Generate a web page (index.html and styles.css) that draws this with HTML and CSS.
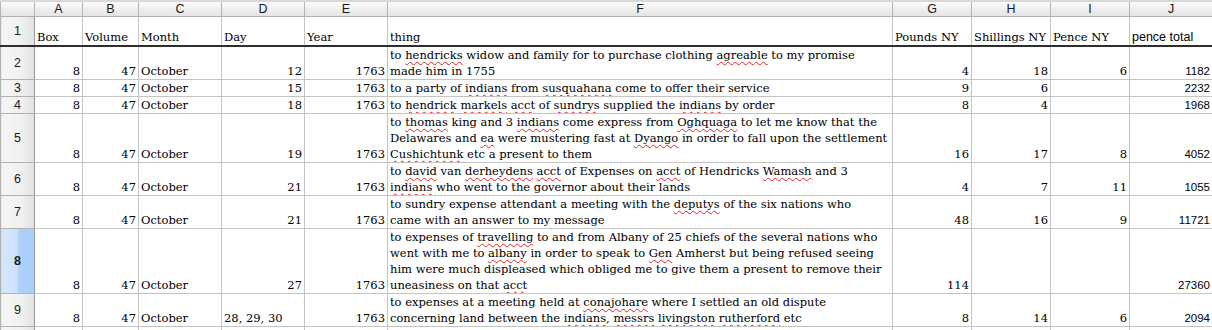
FILE: index.html
```html
<!DOCTYPE html>
<html lang="en">
<head>
  <meta charset="UTF-8">
  <title>Expenses 1763 - Sheet</title>
  <link rel="stylesheet" href="styles.css">
</head>
<body>
  <div class="topstrip"></div>
  <table class="sheet">
    <colgroup>
      <col class="c-num">
      <col class="c-a">
      <col class="c-b">
      <col class="c-c">
      <col class="c-d">
      <col class="c-e">
      <col class="c-f">
      <col class="c-g">
      <col class="c-h">
      <col class="c-i">
      <col class="c-j">
    </colgroup>
    <thead>
      <tr class="letters">
        <th class="corner"></th>
        <th>A</th><th>B</th><th>C</th><th>D</th><th>E</th>
        <th>F</th><th>G</th><th>H</th><th>I</th><th>J</th>
      </tr>
    </thead>
    <tbody>
      <!-- header row of the data -->
      <tr class="titles">
        <th class="rownum">1</th>
        <td>Box</td>
        <td>Volume</td>
        <td>Month</td>
        <td>Day</td>
        <td>Year</td>
        <td>thing</td>
        <td>Pounds NY</td>
        <td>Shillings NY</td>
        <td>Pence NY</td>
        <td class="sans">pence total</td>
      </tr>
      <tr>
        <th class="rownum">2</th>
        <td class="n">8</td><td class="n">47</td><td>October</td><td class="n">12</td><td class="n">1763</td>
        <td>to <span class="sp">hendricks</span> widow and family for to purchase clothing <span class="sp">agreable</span> to my promise<br>made him in 1755</td>
        <td class="n">4</td><td class="n">18</td><td class="n">6</td><td class="n sans">1182</td>
      </tr>
      <tr>
        <th class="rownum">3</th>
        <td class="n">8</td><td class="n">47</td><td>October</td><td class="n">15</td><td class="n">1763</td>
        <td>to a party of <span class="sp">indians</span> from <span class="sp">susquahana</span> come to offer their service</td>
        <td class="n">9</td><td class="n">6</td><td></td><td class="n sans">2232</td>
      </tr>
      <tr>
        <th class="rownum">4</th>
        <td class="n">8</td><td class="n">47</td><td>October</td><td class="n">18</td><td class="n">1763</td>
        <td>to <span class="sp">hendrick</span> <span class="sp">markels</span> <span class="sp">acct</span> of <span class="sp">sundrys</span> supplied the <span class="sp">indians</span> by order</td>
        <td class="n">8</td><td class="n">4</td><td></td><td class="n sans">1968</td>
      </tr>
      <tr>
        <th class="rownum">5</th>
        <td class="n">8</td><td class="n">47</td><td>October</td><td class="n">19</td><td class="n">1763</td>
        <td>to <span class="sp">thomas</span> king and 3 <span class="sp">indians</span> come express from <span class="sp">Oghquaga</span> to let me know that the<br>Delawares and <span class="sp">ea</span> were mustering fast at <span class="sp">Dyango</span> in order to fall upon the settlement<br><span class="sp">Cushichtunk</span> etc a present to them</td>
        <td class="n">16</td><td class="n">17</td><td class="n">8</td><td class="n sans">4052</td>
      </tr>
      <tr>
        <th class="rownum">6</th>
        <td class="n">8</td><td class="n">47</td><td>October</td><td class="n">21</td><td class="n">1763</td>
        <td>to <span class="sp">david</span> van <span class="sp">derheydens</span> <span class="sp">acct</span> of Expenses on <span class="sp">acct</span> of Hendricks <span class="sp">Wamash</span> and 3<br><span class="sp">indians</span> who went to the governor about their lands</td>
        <td class="n">4</td><td class="n">7</td><td class="n">11</td><td class="n sans">1055</td>
      </tr>
      <tr>
        <th class="rownum">7</th>
        <td class="n">8</td><td class="n">47</td><td>October</td><td class="n">21</td><td class="n">1763</td>
        <td>to sundry expense attendant a meeting with the <span class="sp">deputys</span> of the six nations who<br>came with an answer to my message</td>
        <td class="n">48</td><td class="n">16</td><td class="n">9</td><td class="n sans">11721</td>
      </tr>
      <tr class="selected">
        <th class="rownum">8</th>
        <td class="n">8</td><td class="n">47</td><td>October</td><td class="n">27</td><td class="n">1763</td>
        <td>to expenses of <span class="sp">travelling</span> to and from Albany of 25 chiefs of the several nations who<br>went with me to <span class="sp">albany</span> in order to speak to <span class="sp">Gen</span> Amherst but being refused seeing<br>him were much displeased which obliged me to give them a present to remove their<br>uneasiness on that <span class="sp">acct</span></td>
        <td class="n">114</td><td></td><td></td><td class="n sans">27360</td>
      </tr>
      <tr>
        <th class="rownum">9</th>
        <td class="n">8</td><td class="n">47</td><td>October</td><td>28, 29, 30</td><td class="n">1763</td>
        <td>to expenses at a meeting held at <span class="sp">conajohare</span> where I settled an old dispute<br>concerning land between the <span class="sp">indians</span>, <span class="sp">messrs</span> <span class="sp">livingston</span> <span class="sp">rutherford</span> etc</td>
        <td class="n">8</td><td class="n">14</td><td class="n">6</td><td class="n sans">2094</td>
      </tr>
      <tr class="partial">
        <th class="rownum"></th>
        <td></td><td></td><td></td><td></td><td></td><td></td><td></td><td></td><td></td><td></td>
      </tr>
    </tbody>
  </table>
</body>
</html>
```

FILE: styles.css
```css
body {
  margin: 0;
  background-color: #fff;
  font-family: "DejaVu Serif", serif;
  font-size: 11.5px;
  color: #000;
  overflow: hidden;
}

.topstrip {
  height: 2px;
  background-color: #d8d8d8;
}

.sheet {
  border-collapse: collapse;
  table-layout: fixed;
  width: 1212px;
}

.c-num { width: 34px; }
.c-a { width: 48px; }
.c-b { width: 56px; }
.c-c { width: 83px; }
.c-d { width: 83px; }
.c-e { width: 83px; }
.c-f { width: 505px; }
.c-g { width: 79px; }
.c-h { width: 79px; }
.c-i { width: 79px; }
.c-j { width: 83px; }

.sheet td {
  border: 1px solid #c4c4c4;
  padding: 0 2px;
  line-height: 16px;
  vertical-align: bottom;
  white-space: nowrap;
  overflow: hidden;
}

.sheet td.n {
  text-align: right;
}

.sheet .sans {
  font-family: "Liberation Sans", Arial, sans-serif;
  font-size: 11.5px;
}

.sheet .titles .sans {
  font-size: 12.5px;
}

/* column letters */
.letters th {
  height: 14px;
  padding: 0;
  border: 1px solid #b2b2b2;
  border-top: none;
  background: linear-gradient(#fbfbfb, #e4e4e4);
  font-family: "Liberation Sans", Arial, sans-serif;
  font-size: 12.5px;
  font-weight: normal;
  line-height: 14px;
  color: #1a1a1a;
}

/* row numbers */
.rownum {
  padding: 0;
  border: 1px solid #b2b2b2;
  border-right-color: #9a9a9a;
  background: linear-gradient(to right, #f6f6f6, #f0f0f0 60%, #e2e2e2);
  font-family: "Liberation Sans", Arial, sans-serif;
  font-size: 12.5px;
  font-weight: normal;
  color: #1a1a1a;
  text-align: center;
  vertical-align: middle;
}

.titles td {
  height: 28px;
  border-bottom: 2px solid #2e2e2e;
}

.titles .rownum {
  border-bottom: 2px solid #2e2e2e;
}

.selected .rownum {
  background: linear-gradient(to right, #d6e8fd, #cbe1fb 48%, #aed1f9 52%, #a8cef8);
  font-weight: bold;
}

.partial td,
.partial .rownum {
  height: 16px;
}

/* spell check marks */
.sp {
  text-decoration: underline wavy #e22222;
  text-decoration-thickness: 1px;
  text-underline-offset: 2px;
  text-decoration-skip-ink: none;
}
```
